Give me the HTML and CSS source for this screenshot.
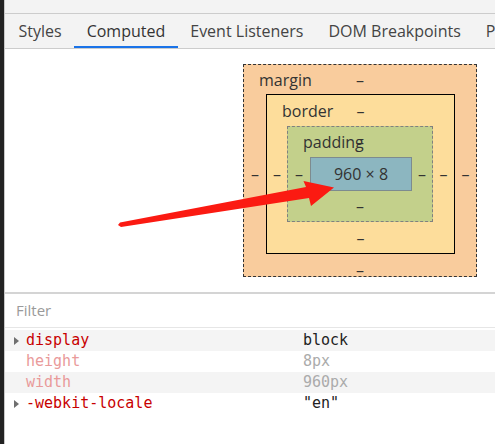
FILE: index.html
```html
<!DOCTYPE html>
<html>
<head>
<meta charset="utf-8">
<link rel="stylesheet" href="styles.css">
</head>
<body>
<div class="app">
  <div class="topbar"></div>
  <div class="tabs">
    <div class="tab">Styles</div>
    <div class="tab active">Computed</div>
    <div class="tab">Event Listeners</div>
    <div class="tab">DOM Breakpoints</div>
    <div class="tab">Properties</div>
  </div>
  <div class="boxpane">
    <div class="bm bm-margin">
      <div class="bm-top"><span class="bm-label">margin</span><span class="bm-val">–</span></div>
      <div class="bm-mid">
        <div class="bm-side side-22">–</div>
        <div class="bm bm-border">
          <div class="bm-top"><span class="bm-label">border</span><span class="bm-val">–</span></div>
          <div class="bm-mid">
            <div class="bm-side side-20">–</div>
            <div class="bm bm-padding">
              <div class="bm-top"><span class="bm-label">padding</span><span class="bm-val">–</span></div>
              <div class="bm-mid">
                <div class="bm-side side-22">–</div>
                <div class="bm-content">960 × 8</div>
                <div class="bm-side side-20">–</div>
              </div>
              <div class="bm-bottom">–</div>
            </div>
            <div class="bm-side side-21">–</div>
          </div>
          <div class="bm-bottom">–</div>
        </div>
        <div class="bm-side side-21">–</div>
      </div>
      <div class="bm-bottom">–</div>
    </div>
  </div>
  <div class="filter">Filter</div>
  <div class="props">
    <div class="row shaded">
      <span class="tri"><svg width="5" height="8" viewBox="0 0 5 8"><polygon points="0,0 5,4 0,8" fill="#6f6f6f"/></svg></span>
      <span class="pname">display</span>
      <span class="pval">block</span>
    </div>
    <div class="row faded">
      <span class="tri"></span>
      <span class="pname">height</span>
      <span class="pval">8px</span>
    </div>
    <div class="row shaded faded">
      <span class="tri"></span>
      <span class="pname">width</span>
      <span class="pval">960px</span>
    </div>
    <div class="row">
      <span class="tri"><svg width="5" height="8" viewBox="0 0 5 8"><polygon points="0,0 5,4 0,8" fill="#6f6f6f"/></svg></span>
      <span class="pname">-webkit-locale</span>
      <span class="pval">"en"</span>
    </div>
  </div>
</div>
<svg class="arrow" width="495" height="444" viewBox="0 0 495 444">
  <polygon points="118,225 120,222.5 306,187 303.5,181 334,187.5 311,206 309,198 121,227" fill="#fb1a12"/>
</svg>
</body>
</html>
```

FILE: styles.css
```css
html, body {
  margin: 0;
  padding: 0;
}
body {
  background: #222222;
  width: 495px;
  height: 444px;
  overflow: hidden;
  position: relative;
  font-family: "Open Sans", "Noto Sans", sans-serif;
}
.app {
  margin-left: 4px;
  border-left: 1px solid #c8c8c8;
  background: #ffffff;
  height: 444px;
  overflow: hidden;
}
.topbar {
  height: 13px;
  background: #f3f3f3;
  border-bottom: 1px solid #cccccc;
}
.tabs {
  display: flex;
  height: 34px;
  background: #f3f3f3;
  border-bottom: 1px solid #cccccc;
  padding-left: 1px;
  white-space: nowrap;
  overflow: hidden;
}
.tab {
  flex: none;
  box-sizing: border-box;
  height: 34px;
  line-height: 34px;
  padding: 0 12.5px;
  font-size: 16px;
  color: #444444;
}
.tab.active {
  color: #333333;
  border-bottom: 2px solid #1a73e8;
}
.boxpane {
  box-sizing: border-box;
  height: 243px;
  padding: 15px 0 0 238px;
  font-size: 16px;
  color: #333333;
}
.bm {
  display: flex;
  flex-direction: column;
}
.bm-margin {
  width: 232px;
  background: #f9cc9d;
  border: 1px dashed #333333;
}
.bm-border {
  width: 187px;
  background: #fddd9b;
  border: 1px solid #000000;
}
.bm-padding {
  width: 144px;
  background: #c3d08b;
  border: 1px dashed #808080;
}
.bm-top {
  display: grid;
  grid-template-columns: 1fr;
  align-items: center;
  white-space: nowrap;
}
.bm-top > span {
  grid-area: 1 / 1;
}
.bm-margin > .bm-top { height: 29px; }
.bm-border > .bm-top { height: 31px; }
.bm-padding > .bm-top { height: 30px; }
.bm-label {
  justify-self: start;
  padding-left: 15px;
}
.bm-val {
  justify-self: center;
}
.bm-mid {
  display: flex;
  align-items: center;
}
.bm-side {
  flex: none;
  text-align: center;
}
.side-20 { width: 20px; }
.side-21 { width: 21px; }
.side-22 { width: 22px; }
.bm-bottom {
  display: flex;
  justify-content: center;
  align-items: center;
}
.bm-padding > .bm-bottom { height: 30px; }
.bm-border > .bm-bottom { height: 31px; }
.bm-margin > .bm-bottom {
  box-sizing: border-box;
  height: 22px;
  line-height: 22px;
  padding-top: 5px;
  align-items: flex-start;
}
.bm-content {
  flex: none;
  box-sizing: border-box;
  width: 102px;
  height: 34px;
  background: #8cb6c0;
  border: 1px solid #7d8b8f;
  display: flex;
  align-items: center;
  justify-content: center;
}
.filter {
  box-sizing: border-box;
  height: 36px;
  border-top: 2px solid #d4d4d4;
  border-bottom: 1px solid #e6e6e6;
  padding-left: 11px;
  line-height: 33px;
  font-size: 15px;
  color: #9a9a9a;
}
.props {
  padding-top: 2px;
  font-family: "DejaVu Sans Mono", "Liberation Mono", monospace;
  font-size: 15px;
}
.row {
  display: grid;
  grid-template-columns: 12px 277px 1fr;
  align-items: center;
  height: 21px;
  line-height: 21px;
  padding-left: 9px;
  white-space: nowrap;
}
.row.shaded {
  background: #f4f4f4;
}
.tri {
  display: flex;
  align-items: center;
}
.pname {
  color: #c80000;
}
.pval {
  color: #222222;
}
.row.faded .pname {
  color: #e99a9a;
}
.row.faded .pval {
  color: #ababab;
}
.arrow {
  position: absolute;
  left: 0;
  top: 0;
  pointer-events: none;
}
```
